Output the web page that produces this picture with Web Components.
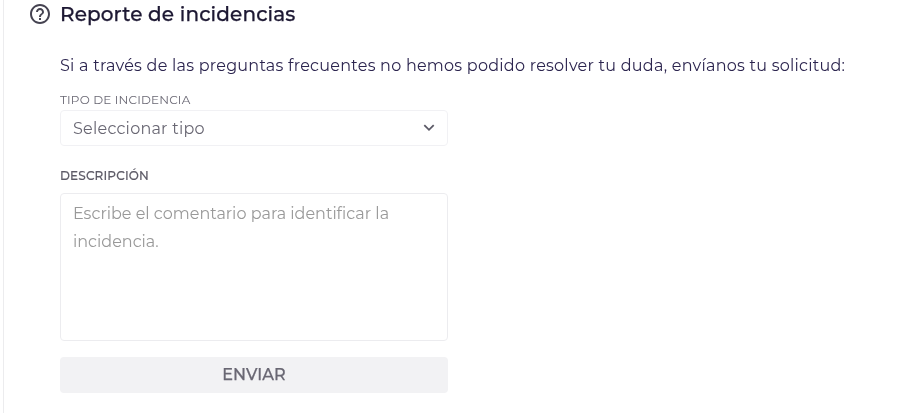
<!DOCTYPE html>
<html lang="es"><head><meta charset="utf-8"><title>Reporte de incidencias</title>
<style>
body{margin:0;background:#fff;font-family:Montserrat,Inter,"Open Sans",sans-serif;overflow:hidden}
</style></head><body>
<report-panel>
<section-title>Reporte de incidencias</section-title>
<intro-text>Si a través de las preguntas frecuentes no hemos podido resolver tu duda, envíanos tu solicitud:</intro-text>
<select-field label="TIPO DE INCIDENCIA">Seleccionar tipo</select-field>
<comment-field label="DESCRIPCIÓN">Escribe el comentario para identificar la<br>incidencia.</comment-field>
<send-button>ENVIAR</send-button>
</report-panel>
<script>
function define(name, html){
  customElements.define(name, class extends HTMLElement{
    constructor(){
      super();
      this.attachShadow({mode:'open'}).innerHTML = html;
      const label = this.shadowRoot.querySelector('.label');
      if(label) label.textContent = this.getAttribute('label');
    }
  });
}
define('report-panel', `<style>
:host{display:block;box-sizing:border-box;height:413px;margin-left:3px;border-left:1px solid #ececee;padding-left:26px;will-change:transform}
</style><slot></slot>`);
define('section-title', `<style>
:host{display:flex;align-items:center;height:28px;gap:10px;color:#1d1833;font-size:20px;font-weight:500;letter-spacing:.12px;white-space:nowrap}
svg{width:20px;height:20px;flex:none}
h2{margin:0;font:inherit;line-height:28px;-webkit-text-stroke:.25px currentColor}
</style><svg viewBox="2 2 20 20" fill="#454351"><path d="M11 18h2v-2h-2v2zm1-16C6.48 2 2 6.48 2 12s4.480 10 10 10 10-4.480 10-10S17.520 2 12 2zm0 18c-4.410 0-8-3.590-8-8s3.590-8 8-8 8 3.590 8 8-3.590 8-8 8zm0-14c-2.210 0-4 1.790-4 4h2c0-1.100.9-2 2-2s2 .9 2 2c0 2-3 1.750-3 5h2c0-2.250 3-2.500 3-5 0-2.210-1.790-4-4-4z"/></svg><h2><slot></slot></h2>`);
define('intro-text', `<style>
:host{display:block;margin:24px 0 0 30px;line-height:28px;font-size:16px;font-weight:400;letter-spacing:.245px;color:#2c254f;white-space:nowrap}
</style><slot></slot>`);
define('select-field', `<style>
:host{display:block;margin:12px 0 0 30px;width:388px}
.label{font-size:12px;line-height:16px;height:18px;letter-spacing:.17px;color:#696773;font-weight:400}
.box{display:flex;align-items:center;justify-content:space-between;box-sizing:border-box;height:36px;padding:0 12px;border:1px solid #f1f1f4;border-radius:4px;font-size:16px;font-weight:400;letter-spacing:.23px;color:#696773}
svg{width:12px;height:8px}
</style><div class="label"></div><div class="box"><span><slot></slot></span><svg viewBox="0 0 12 8" fill="none" stroke="#5b5966" stroke-width="1.8"><path d="M1.3 1.2 6 5.8l4.7-4.6"/></svg></div>`);
define('comment-field', `<style>
:host{display:block;margin:21px 0 0 30px;width:388px}
.label{font-size:12px;line-height:18px;height:26px;letter-spacing:.16px;color:#5d5b67;font-weight:500;-webkit-text-stroke:.15px currentColor}
.box{box-sizing:border-box;height:148px;padding:6px 12px;border:1px solid #ececef;border-radius:4px;font-size:16px;line-height:28px;font-weight:400;color:#999;white-space:nowrap}
</style><div class="label"></div><div class="box"><slot></slot></div>`);
define('send-button', `<style>
:host{display:block;margin:16px 0 0 30px;width:388px}
button{display:block;width:100%;height:36px;border:0;border-radius:4px;background:#f2f2f4;padding:0 0 1px;font:500 16px Montserrat,Inter,sans-serif;color:#696773;-webkit-text-stroke:.25px currentColor;letter-spacing:.1px}
</style><button type="button"><slot></slot></button>`);
</script></body></html>
